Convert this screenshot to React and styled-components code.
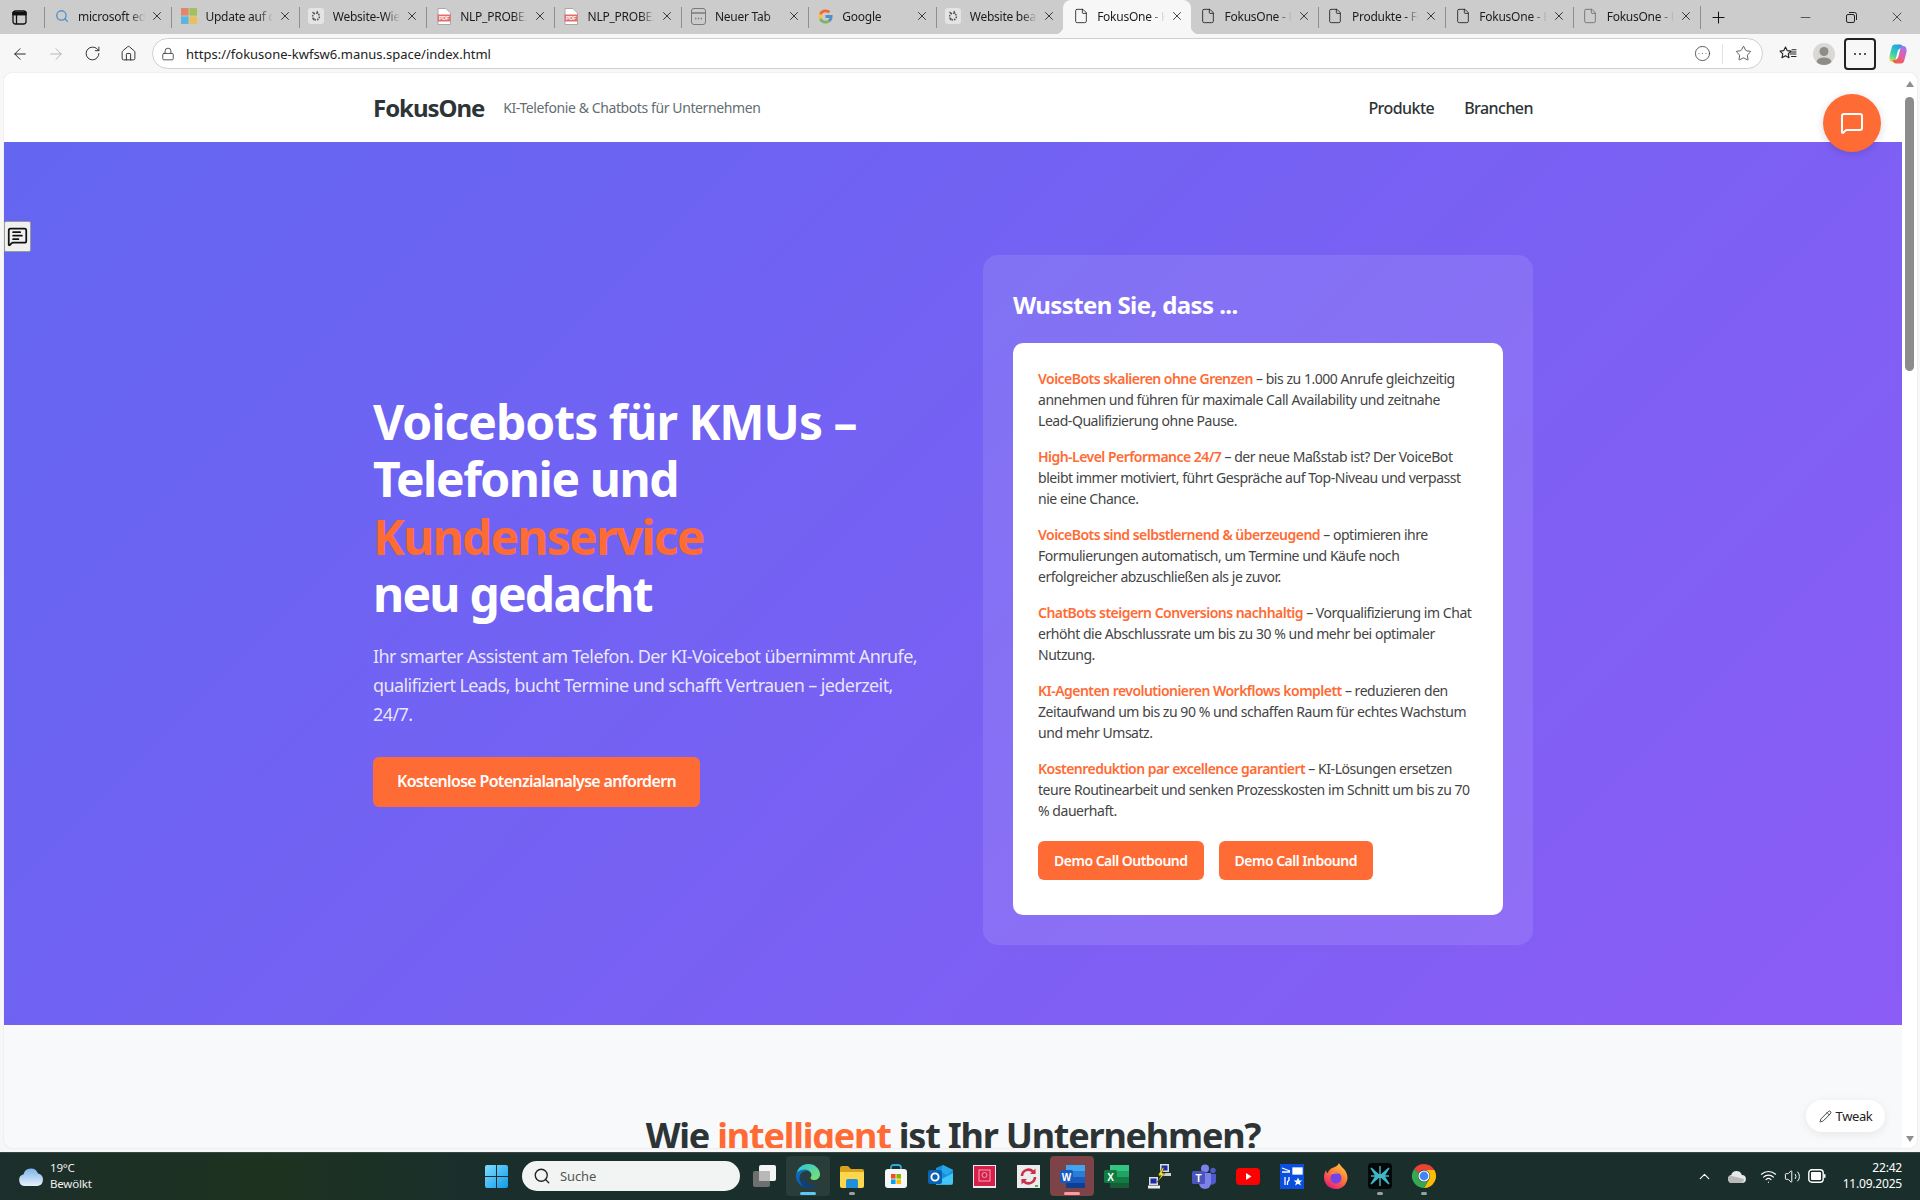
import styled, { createGlobalStyle } from "styled-components";
import {
  ArrowLeft,
  ArrowRight,
  RotateCw,
  House,
  Lock,
  Star,
  X,
  Plus,
  Minus,
  Search,
  MessageSquare,
  MessageSquareText,
  Pencil,
  File,
  ChevronUp,
  Wifi,
  Volume2,
  CircleEllipsis,
} from "lucide-react";
import { FcGoogle } from "react-icons/fc";

const FONT = `"Noto Sans", "Open Sans", Arial, sans-serif`;
const ORANGE = "#ff6b35";

const Global = createGlobalStyle`
  html, body {
    margin: 0;
    padding: 0;
    overflow: hidden;
    background: #f7f7f7;
    font-family: ${FONT};
  }
  * { box-sizing: border-box; }
`;

const Shell = styled.div`
  width: 1920px;
  height: 1200px;
  display: flex;
  flex-direction: column;
  overflow: hidden;
  background: #f7f7f7;
`;

/* browser chrome */
const TitleBar = styled.div`
  height: 34px;
  display: flex;
  align-items: center;
  background: #cccccc;
  flex-shrink: 0;
`;

const SideBtn = styled.div`
  width: 44px;
  display: flex;
  justify-content: center;
  padding-right: 6px;
  color: #111;
`;

const Tab = styled.div`
  position: relative;
  width: 127.4px;
  height: 34px;
  display: flex;
  align-items: center;
  padding: 0 6px 2px 9px;
  font-size: 12px;
  letter-spacing: -0.25px;
  color: #1c1c1c;
  background: ${(p) => (p.$active ? "#f7f7f7" : "transparent")};
  border-radius: ${(p) => (p.$active ? "8px 8px 0 0" : "0")};

  &::before {
    content: "";
    position: absolute;
    left: 0;
    top: 7px;
    bottom: 6px;
    width: 1px;
    background: ${(p) => (p.$active || p.$afterActive ? "transparent" : "#8f8f8f")};
  }

  ${(p) =>
    p.$active &&
    `&::after {
      content: "";
      position: absolute;
      left: -8px;
      right: -8px;
      bottom: 0;
      height: 8px;
      background:
        radial-gradient(circle at 0 0, transparent 8px, #f7f7f7 8.5px) left / 8px 8px no-repeat,
        radial-gradient(circle at 100% 0, transparent 8px, #f7f7f7 8.5px) right / 8px 8px no-repeat;
    }`}
`;

const FavSlot = styled.div`
  width: 17px;
  height: 18px;
  display: flex;
  align-items: center;
  justify-content: center;
  flex-shrink: 0;
  margin-right: 8px;
  opacity: ${(p) => p.$fade ?? 1};
`;

const TabTitle = styled.span`
  flex: 1;
  white-space: nowrap;
  overflow: hidden;
  -webkit-mask-image: linear-gradient(90deg, #000 78%, transparent 100%);
  mask-image: linear-gradient(90deg, #000 78%, transparent 100%);
`;

const TabClose = styled.div`
  width: 16px;
  display: flex;
  justify-content: center;
  flex-shrink: 0;
  margin-left: 4px;
  color: #1a1a1a;
`;

const NewTab = styled.div`
  width: 36px;
  height: 34px;
  display: flex;
  align-items: center;
  justify-content: center;
  border-left: 1px solid #8f8f8f;
  border-image: linear-gradient(#ccc 20%, #8f8f8f 20%, #8f8f8f 82%, #ccc 82%) 1;
  color: #111;
`;

const WinControls = styled.div`
  margin-left: auto;
  display: flex;
  align-items: center;
  color: #222;
`;

const WinBtn = styled.div`
  width: 46px;
  display: flex;
  justify-content: center;
`;

const NavBar = styled.div`
  height: 39px;
  flex-shrink: 0;
  display: flex;
  align-items: center;
  padding-left: 2px;
  background: #f7f7f7;
`;

const NavBtn = styled.div`
  width: 36px;
  display: flex;
  justify-content: center;
  color: ${(p) => (p.$off ? "#b4b4b4" : "#242424")};
`;

const UrlBar = styled.div`
  margin-left: 6px;
  width: 1611px;
  height: 31px;
  flex-shrink: 0;
  display: flex;
  align-items: center;
  background: #fff;
  border: 1px solid #cfcfcf;
  border-radius: 16px;
  padding: 0 10px 0 8px;
  color: #333;
`;

const UrlText = styled.span`
  margin-left: 11px;
  font-size: 13px;
  color: #222;
  flex: 1;
`;

const UrlDivider = styled.div`
  width: 1px;
  height: 20px;
  background: #e2e2e2;
  margin: 0 12px 0 11px;
`;

const ToolIcons = styled.div`
  display: flex;
  align-items: center;
  margin-left: 7px;
  color: #222;
`;

const ToolSlot = styled.div`
  width: ${(p) => p.$w || 36}px;
  display: flex;
  justify-content: center;
`;

const Avatar = styled.div`
  width: 22px;
  height: 22px;
  border-radius: 50%;
  background: #d9d8d4;
  overflow: hidden;
`;

const MoreBtn = styled.div`
  width: 32px;
  height: 32px;
  margin-left: 2px;
  border: 2px solid #222;
  border-radius: 4px;
  display: flex;
  align-items: center;
  justify-content: center;
  gap: 3px;

  i {
    width: 2px;
    height: 2px;
    background: #222;
    border-radius: 50%;
  }
`;

/* viewport */
const ViewRow = styled.div`
  position: relative;
  flex: 1;
  min-height: 0;
  margin: 0 3px 4px 4px;
  display: flex;
  background: #fff;
  border-radius: 8px;
  overflow: hidden;
  box-shadow: 0 0 1px rgba(0, 0, 0, 0.3);
`;

const Page = styled.div`
  width: 1898px;
  flex-shrink: 0;
  overflow: hidden;
  color: #2d3436;
  font-family: ${FONT};
`;

const ScrollBar = styled.div`
  flex: 1;
  display: flex;
  flex-direction: column;
  align-items: center;
  background: #fff;
  padding: 8px 0 6px;
`;

const ScrollArrow = styled.div`
  width: 0;
  height: 0;
  border-left: 4.5px solid transparent;
  border-right: 4.5px solid transparent;
  ${(p) => (p.$down ? "border-top" : "border-bottom")}: 6px solid #8f8f8f;
  ${(p) => (p.$down ? "margin-top: auto;" : "")}
`;

const ScrollThumb = styled.div`
  width: 9px;
  height: 274px;
  margin-top: 10px;
  background: #8c8c8c;
  border-radius: 5px;
`;

const Header = styled.header`
  height: 69px;
  display: flex;
  justify-content: center;
  background: #fff;
`;

const Container = styled.div`
  width: 1160px;
  display: flex;
  align-items: center;
`;

const Logo = styled.div`
  font-size: 24px;
  font-weight: 700;
  letter-spacing: -1.05px;
  color: #2d3436;
`;

const Tagline = styled.div`
  margin-left: 19px;
  font-size: 14px;
  letter-spacing: -0.4px;
  color: #636e72;
`;

const NavLinks = styled.nav`
  margin-left: auto;
  display: flex;
  gap: 30px;
  font-size: 16px;
  font-weight: 500;
  letter-spacing: -0.55px;
  color: #2d3436;
`;

const Hero = styled.section`
  padding: 113px 0 80px;
  display: flex;
  justify-content: center;
  background: linear-gradient(135deg, #6366f1 0%, #8b5cf6 100%);
`;

const HeroGrid = styled.div`
  width: 1160px;
  display: grid;
  grid-template-columns: minmax(0, 1fr) minmax(0, 1fr);
  gap: 60px;
  align-items: center;
`;

const HeroTitle = styled.h1`
  margin: 0 0 19px;
  font-size: 48px;
  line-height: 1.2;
  font-weight: 700;
  color: #fff;
`;

const TitleLine = styled.span`
  display: block;
  white-space: nowrap;
  letter-spacing: ${(p) => p.$track}px;
  color: ${(p) => (p.$accent ? ORANGE : "inherit")};
`;

const HeroText = styled.p`
  margin: 0 0 29px;
  font-size: 18px;
  line-height: 1.6;
  letter-spacing: -0.6px;
  white-space: pre;
  color: rgba(255, 255, 255, 0.85);
`;

const HeroButton = styled.a`
  display: inline-block;
  padding: 13px 24px;
  height: 50px;
  font-size: 16px;
  font-weight: 600;
  letter-spacing: -0.68px;
  color: #fff;
  background: ${ORANGE};
  border-radius: 6px;
`;

const FactCard = styled.aside`
  padding: 30px;
  background: rgba(255, 255, 255, 0.1);
  border-radius: 15px;
`;

const FactTitle = styled.h2`
  margin: 0 0 18px;
  font-size: 24px;
  line-height: 40px;
  font-weight: 700;
  letter-spacing: -0.6px;
  color: #fff;
`;

const FactBody = styled.div`
  padding: 25px;
  background: #fff;
  border-radius: 10px;
`;

const Fact = styled.p`
  margin: 0 0 15px;
  font-size: 14px;
  line-height: 21px;
  letter-spacing: -0.46px;
  color: #444;
  white-space: pre;

  strong {
    color: ${ORANGE};
    font-weight: 600;
    letter-spacing: -0.53px;
  }
`;

const DemoRow = styled.div`
  display: flex;
  gap: 15px;
  margin: 20px 0 10px;
`;

const DemoButton = styled.a`
  height: 39px;
  padding: 0 16px;
  display: flex;
  align-items: center;
  font-size: 14px;
  font-weight: 600;
  letter-spacing: -0.5px;
  color: #fff;
  background: ${ORANGE};
  border-radius: 6px;
`;

const NextSection = styled.section`
  background: #f8f9fa;
  padding-top: 82px;
  height: 300px;
  text-align: center;
`;

const NextTitle = styled.h2`
  margin: 0;
  font-size: 36px;
  line-height: 1.6;
  font-weight: 700;
  letter-spacing: -1.22px;
  color: #2d3436;

  span {
    color: ${ORANGE};
  }
`;

/* overlays */
const ChatFab = styled.div`
  position: absolute;
  top: 21px;
  right: 36px;
  width: 58px;
  height: 58px;
  border-radius: 50%;
  background: ${ORANGE};
  color: #fff;
  display: flex;
  align-items: center;
  justify-content: center;
  box-shadow: 0 2px 8px rgba(0, 0, 0, 0.15);
`;

const CommentBtn = styled.div`
  position: absolute;
  top: 148px;
  left: 0;
  width: 27px;
  height: 31px;
  background: #f0f0f0;
  border: 1px solid #9a9a9a;
  border-radius: 2px;
  display: flex;
  align-items: center;
  justify-content: center;
  color: #111;
`;

const TweakPill = styled.div`
  position: absolute;
  right: 32px;
  bottom: 16px;
  width: 79px;
  height: 32px;
  border-radius: 16px;
  background: #fff;
  display: flex;
  align-items: center;
  justify-content: center;
  gap: 4px;
  font-size: 13px;
  letter-spacing: -0.4px;
  color: #222;
  box-shadow: 0 2px 10px rgba(0, 0, 0, 0.08);
`;

/* taskbar */
const Taskbar = styled.footer`
  height: 48px;
  flex-shrink: 0;
  display: flex;
  align-items: center;
  color: #fff;
  box-shadow: inset 0 1px 0 #3b4744;
  background: linear-gradient(90deg, #1b2e2b 0%, #1e331f 14%, #1a2f2b 24%, #1a2f2c 100%);
  font-family: ${FONT};
`;

const Weather = styled.div`
  width: 474px;
  flex-shrink: 0;
  display: flex;
  align-items: center;
  gap: 6px;
  padding-left: 18px;
`;

const WeatherText = styled.div`
  font-size: 11.5px;
  line-height: 16px;
  letter-spacing: -0.2px;
  color: #f0f0f0;
`;

const TaskSlot = styled.div`
  position: relative;
  width: 44px;
  height: 40px;
  display: flex;
  align-items: center;
  justify-content: center;
  border-radius: 4px;
  background: ${(p) => p.$bg || "transparent"};

  &::after {
    content: "";
    position: absolute;
    bottom: 1px;
    left: 50%;
    transform: translateX(-50%);
    width: ${(p) => (p.$bar ? "16px" : p.$dot ? "6px" : "0")};
    height: 3px;
    border-radius: 2px;
    background: ${(p) => p.$bar || "#9aa3a0"};
  }
`;

const SearchBox = styled.div`
  width: 218px;
  height: 30px;
  margin: 0 2px 0 4px;
  border-radius: 15px;
  background: #f2f4f3;
  display: flex;
  align-items: center;
  gap: 9px;
  padding-left: 11px;
  font-size: 13px;
  letter-spacing: -0.1px;
  color: #555;
`;

const Tray = styled.div`
  margin-left: auto;
  display: flex;
  align-items: center;
  padding-right: 18px;
  color: #fff;
`;

const TraySlot = styled.div`
  width: ${(p) => p.$w || 24}px;
  display: flex;
  justify-content: center;
`;

const Clock = styled.div`
  margin-left: 14px;
  text-align: right;
  font-size: 12px;
  line-height: 16px;
  letter-spacing: -0.2px;
`;

/* small drawings */
const DocIcon = ({ color = "#111" }) => <File size={16} strokeWidth={1.2} color={color} />;

const SidebarIcon = () => (
  <svg width="15" height="15" viewBox="0 0 15 15" fill="none" stroke="#111" strokeWidth="1.3">
    <rect x="1" y="1" width="13" height="13" rx="2.5" />
    <path d="M1 4.5h13M4.5 4.5V14" />
    <path d="M1 2.5h13v2H1z" fill="#111" />
  </svg>
);

const MsFavicon = () => (
  <svg width="16" height="16" viewBox="0 0 16 16">
    <rect width="7.6" height="7.6" fill="#f25022" />
    <rect x="8.4" width="7.6" height="7.6" fill="#7fba00" />
    <rect y="8.4" width="7.6" height="7.6" fill="#00a4ef" />
    <rect x="8.4" y="8.4" width="7.6" height="7.6" fill="#ffb900" />
  </svg>
);

const ManusFavicon = () => (
  <svg width="16" height="16" viewBox="0 0 16 16" fill="none">
    <rect width="16" height="16" rx="3" fill="#e4e4e4" />
    <circle cx="8" cy="8.5" r="3.4" stroke="#555" strokeWidth="1.5" strokeDasharray="1.6 1" />
    <path d="M4.5 4l2 2M9 3l1 2.5M5 12l1.5-1.5" stroke="#555" strokeWidth="1.2" />
  </svg>
);

const PdfFavicon = () => (
  <svg width="14" height="17" viewBox="0 0 14 17">
    <path d="M1 .5h8l4.5 4.5v11.5H1z" fill="#fff" stroke="#a8a8a8" />
    <rect x="0.5" y="6.5" width="13" height="7" fill="#e0706d" />
    <text x="7" y="12" textAnchor="middle" fontSize="5.4" fontWeight="700" fill="#fff" fontFamily="Liberation Sans">
      PDF
    </text>
  </svg>
);

const NewTabFavicon = () => (
  <svg width="15" height="17" viewBox="0 0 15 17" fill="none" stroke="#7a7a7a">
    <rect x="0.5" y="0.5" width="14" height="16" rx="2.5" />
    <path d="M.5 5h14M4 10.5h1.4M6.8 10.5h1.4M9.6 10.5H11" strokeWidth="1.3" />
  </svg>
);

const SearchFavicon = () => <Search size={14} strokeWidth={2.2} color="#4f8fc9" />;

const RestoreIcon = () => (
  <svg width="11" height="11" viewBox="0 0 11 11" fill="none" stroke="#222">
    <rect x="0.5" y="2.5" width="8" height="8" rx="1.5" />
    <path d="M3 .5h5.5a2 2 0 0 1 2 2V8" />
  </svg>
);

const FavStarIcon = () => (
  <svg width="18" height="18" viewBox="0 0 18 18" fill="none" stroke="#222" strokeWidth="1.1" strokeLinejoin="round">
    <path d="M6.5 2l1.7 3.6 3.8.5-2.8 2.7.8 3.9-3.5-1.9L3 12.7l.8-3.9L1 6.1l3.8-.5z" />
    <path d="M11 9h6M12.5 11.5H17M13 4.8h4M11.5 7h5.5" strokeLinecap="round" />
  </svg>
);

const AvatarFigure = () => (
  <Avatar>
    <svg width="22" height="22" viewBox="0 0 22 22" fill="#8f8d88">
      <circle cx="11" cy="8.5" r="4.5" />
      <ellipse cx="11" cy="19" rx="7.5" ry="4.5" />
    </svg>
  </Avatar>
);

const COPILOT_RIBBON =
  "M8 1.5C6 1.5 5 3 4.6 5L2.5 13C2 16 3 19 5.5 19H8L10.3 9.500C10.900 6.500 12.500 5 15 5H16.500C15.800 2.500 14.500 1.500 13 1.500Z";

const CopilotIcon = () => (
  <svg width="22" height="22" viewBox="0 0 22 22">
    <defs>
      <linearGradient id="cpA" x1="0.7" y1="0" x2="0.2" y2="1">
        <stop offset="0" stopColor="#1f9fe8" />
        <stop offset="0.6" stopColor="#33d3b0" />
        <stop offset="1" stopColor="#d8e04a" />
      </linearGradient>
      <linearGradient id="cpB" x1="0.7" y1="0" x2="0.2" y2="1">
        <stop offset="0" stopColor="#f0603c" />
        <stop offset="0.45" stopColor="#e85ca6" />
        <stop offset="1" stopColor="#9a78f5" />
      </linearGradient>
    </defs>
    <path d={COPILOT_RIBBON} fill="url(#cpA)" />
    <path d={COPILOT_RIBBON} fill="url(#cpB)" transform="rotate(180 11 11)" />
  </svg>
);

const WeatherCloud = () => (
  <svg width="26" height="22" viewBox="0 0 26 22">
    <defs>
      <linearGradient id="wc" x1="0" y1="0" x2="0" y2="1">
        <stop offset="0" stopColor="#7db4ec" />
        <stop offset="1" stopColor="#e8f0fa" />
      </linearGradient>
    </defs>
    <path d="M7 21a6 6 0 0 1-1.4-11.8A7.5 7.5 0 0 1 20 8.6 6.3 6.3 0 0 1 19.5 21z" fill="url(#wc)" />
  </svg>
);

const WinLogo = () => (
  <svg width="23" height="23" viewBox="0 0 23 23">
    <defs>
      <linearGradient id="wl" x1="0" y1="0" x2="1" y2="1">
        <stop offset="0" stopColor="#7fdcff" />
        <stop offset="1" stopColor="#0f9bea" />
      </linearGradient>
    </defs>
    <path d="M2 0h9v11H0V2a2 2 0 0 1 2-2zM12 0h9a2 2 0 0 1 2 2v9H12zM0 12h11v11H2a2 2 0 0 1-2-2zM12 12h11v9a2 2 0 0 1-2 2h-9z" fill="url(#wl)" />
  </svg>
);

const TaskView = () => (
  <svg width="25" height="24" viewBox="0 0 25 24">
    <rect x="7" y="1" width="17" height="16" rx="2" fill="#f4f4f4" />
    <rect x="1" y="7" width="17" height="16" rx="2" fill="#6f6f6f" />
    <rect x="7" y="7" width="11" height="10" fill="#b8b8b8" />
  </svg>
);

const EdgeIcon = () => (
  <svg width="26" height="26" viewBox="0 0 26 26">
    <defs>
      <linearGradient id="edB" x1="0" y1="0" x2="0.6" y2="1">
        <stop offset="0" stopColor="#0c7bd0" />
        <stop offset="1" stopColor="#0a4f9e" />
      </linearGradient>
      <linearGradient id="edG" x1="0" y1="0" x2="1" y2="1">
        <stop offset="0" stopColor="#2fc4d8" />
        <stop offset="1" stopColor="#7fe36a" />
      </linearGradient>
    </defs>
    <path d="M1 13C1 6 6.5 1 13 1c7 0 12 5 12 10.5 0 3.5-3 5.5-6 5.5-2 0-3.5-.8-3.5-2 0-1 1-1.5 1-3 0-2.5-2.5-4-5-4-4 0-7 3-7 7 0 4 3 8 8 8.8C6.5 25 1 20 1 13z" fill="url(#edB)" />
    <path d="M2 9.5C3.5 4.5 8 1 13 1c7 0 12 5 12 10.5 0 3.5-3 5.5-6 5.5-2 0-3.5-.8-3.5-2 0-1 1-1.5 1-3 0-3-3-5.5-6.5-5.5-3 0-6.5 1-8 3z" fill="url(#edG)" />
    <path d="M10 13.5c-1.5 5 2.5 10 9 9 1.5-.2 3-1 4-2-1.5 3-5 4.500-9 4.500-3.500 0-5.500-1-6.500-2.500-2-3-.5-7 2.500-9z" fill="#0d3f86" />
  </svg>
);

const FolderIcon = () => (
  <svg width="26" height="23" viewBox="0 0 26 23">
    <path d="M1 3a2 2 0 0 1 2-2h6l3 3h11a2 2 0 0 1 2 2v3H1z" fill="#d9a21c" />
    <path d="M1 7h24v14a2 2 0 0 1-2 2H3a2 2 0 0 1-2-2z" fill="#ffd74f" />
    <path d="M7 16a2 2 0 0 1 2-2h8a2 2 0 0 1 2 2v7H7z" fill="#1f8fdc" />
  </svg>
);

const StoreIcon = () => (
  <svg width="24" height="25" viewBox="0 0 24 25" fill="none">
    <path d="M7 7V3.500A2.500 2.500 0 0 1 9.500 1h5A2.500 2.500 0 0 1 17 3.500V7" stroke="#2aa9dd" strokeWidth="1.8" />
    <rect x="1" y="5" width="22" height="19" rx="3" fill="#f6f6f6" />
    <rect x="7" y="10" width="4.600" height="4.600" fill="#f25022" />
    <rect x="12.400" y="10" width="4.600" height="4.600" fill="#7fba00" />
    <rect x="7" y="15.400" width="4.600" height="4.600" fill="#00a4ef" />
    <rect x="12.400" y="15.400" width="4.600" height="4.600" fill="#ffb900" />
  </svg>
);

const OutlookIcon = () => (
  <svg width="25" height="23" viewBox="0 0 25 23">
    <path d="M8 3l7-3 10 5v12a2 2 0 0 1-2 2H8z" fill="#1490df" />
    <path d="M15 0l10 5-6 5-6-3z" fill="#28a8ea" />
    <path d="M8 17l17-9v10a2 2 0 0 1-2 2H8z" fill="#50d9ff" opacity="0.75" />
    <rect x="0" y="5" width="14" height="14" rx="2" fill="#0b62b5" />
    <circle cx="7" cy="12" r="3.600" fill="none" stroke="#fff" strokeWidth="1.900" />
  </svg>
);

const AcrobatLike = () => (
  <svg width="23" height="23" viewBox="0 0 23 23">
    <rect width="23" height="23" fill="#ececec" />
    <rect x="1" y="1" width="21" height="20" fill="#d61f4b" />
    <rect x="6" y="5" width="11" height="11" fill="none" stroke="#f3a6b6" />
    <circle cx="11.500" cy="10" r="2.500" fill="none" stroke="#f3a6b6" />
  </svg>
);

const SyncLike = () => (
  <svg width="23" height="23" viewBox="0 0 23 23" fill="none">
    <rect width="23" height="23" fill="#ececec" />
    <path d="M5 11a6.500 6.500 0 0 1 11-4.500L18 8" stroke="#c9314a" strokeWidth="2.600" />
    <path d="M18 12a6.500 6.500 0 0 1-11 4.500L5 15" stroke="#c9314a" strokeWidth="2.600" />
    <path d="M18.500 3.500V9H13M4.500 19.500V14H10" fill="#c9314a" />
    <rect x="18" y="20" width="3" height="2" fill="#55b04a" />
  </svg>
);

const WordIcon = () => (
  <svg width="25" height="23" viewBox="0 0 25 23">
    <rect x="6" y="0" width="19" height="6" fill="#41a5ee" />
    <rect x="6" y="6" width="19" height="6" fill="#2b7cd3" />
    <rect x="6" y="12" width="19" height="6" fill="#185abd" />
    <rect x="6" y="18" width="19" height="5" fill="#103f91" />
    <rect x="0" y="5" width="13" height="13" rx="1.500" fill="#185abd" />
    <text x="6.500" y="15.500" textAnchor="middle" fontSize="10" fontWeight="700" fill="#fff" fontFamily="Liberation Sans">
      W
    </text>
  </svg>
);

const ExcelIcon = () => (
  <svg width="25" height="23" viewBox="0 0 25 23">
    <rect x="6" y="0" width="19" height="6" fill="#33c481" />
    <rect x="6" y="6" width="19" height="6" fill="#21a366" />
    <rect x="6" y="12" width="19" height="6" fill="#107c41" />
    <rect x="6" y="18" width="19" height="5" fill="#185c37" />
    <rect x="0" y="5" width="13" height="13" rx="1.500" fill="#107c41" />
    <text x="6.500" y="15.500" textAnchor="middle" fontSize="10" fontWeight="700" fill="#fff" fontFamily="Liberation Sans">
      X
    </text>
  </svg>
);

const PuttyIcon = () => (
  <svg width="24" height="25" viewBox="0 0 24 25">
    <rect x="12" y="0" width="9" height="8" fill="#dcdcdc" />
    <rect x="13.500" y="1.500" width="6" height="5" fill="#1a2aa8" />
    <rect x="11" y="9" width="12" height="3" fill="#cfcfcf" />
    <rect x="1" y="13" width="9" height="8" fill="#dcdcdc" />
    <rect x="2.500" y="14.500" width="6" height="5" fill="#1a2aa8" />
    <rect x="0" y="21.500" width="12" height="3" fill="#eee" />
    <path d="M15 3l-5 8 3 .5-4 7 8-9-3-.5 2-5z" fill="#f4e024" stroke="#222" strokeWidth="0.500" />
  </svg>
);

const TeamsIcon = () => (
  <svg width="25" height="25" viewBox="0 0 25 25">
    <circle cx="13" cy="4.500" r="4" fill="#7b83eb" />
    <circle cx="21" cy="6.500" r="2.700" fill="#5059c9" />
    <path d="M17 10h7v8a4 4 0 0 1-7 1z" fill="#5059c9" />
    <path d="M7 9h12v10a6 6 0 0 1-12 0z" fill="#7b83eb" />
    <rect x="0" y="7" width="13" height="13" rx="1.500" fill="#4b53bc" />
    <text x="6.500" y="17.500" textAnchor="middle" fontSize="10" fontWeight="700" fill="#fff" fontFamily="Liberation Sans">
      T
    </text>
  </svg>
);

const YoutubeIcon = () => (
  <svg width="24" height="17" viewBox="0 0 24 17">
    <rect width="24" height="17" rx="4" fill="#f00" />
    <path d="M10 5l5.500 3.500L10 12z" fill="#fff" />
  </svg>
);

const HpIcon = () => (
  <svg width="24" height="25" viewBox="0 0 24 25" fill="none" stroke="#fff" strokeWidth="1.300">
    <rect width="24" height="25" fill="#0b4fe0" stroke="none" />
    <path d="M2 4l8 3M2 8h8M5 13v8M9 13v3l-1.500 2V21" />
    <rect x="13" y="4" width="9" height="6" fill="#fff" />
    <path d="M18 13.500l1.300 3h3l-2.400 2 1 3-2.900-1.800-2.900 1.800 1-3-2.400-2h3z" fill="#fff" stroke="none" />
  </svg>
);

const FirefoxIcon = () => (
  <svg width="24" height="26" viewBox="0 0 24 26">
    <defs>
      <linearGradient id="ffx" x1="0.8" y1="0" x2="0.2" y2="1">
        <stop offset="0" stopColor="#ffcb3d" />
        <stop offset="0.5" stopColor="#ff7139" />
        <stop offset="1" stopColor="#e31587" />
      </linearGradient>
    </defs>
    <path d="M15 0c1 3 5 5 7 9 2 4 2 8 0 11-2 4-6 6-10 6C5 26 0 21 0 14c0-3 1-5 2-7 0 2 1 3 2 3 0-2 2-4 4-5 3-1 6-2 7-5z" fill="url(#ffx)" />
    <circle cx="12" cy="15" r="5.500" fill="#7542e5" />
    <path d="M7 11c2-2 6-2 8 0-3-1-6 0-8 0z" fill="#ffa436" />
  </svg>
);

const AppStarIcon = () => (
  <svg width="24" height="26" viewBox="0 0 24 26">
    <rect width="24" height="26" rx="4" fill="#050708" />
    <path d="M3 5l9 8 9-8-5 8 5 8-9-8-9 8 5-8zM12 3v20M3 13h18" fill="#3fb8c8" stroke="#3fb8c8" strokeWidth="1.400" />
  </svg>
);

const ChromeIcon = () => (
  <svg width="26" height="26" viewBox="0 0 26 26">
    <path d="M13 1a12 12 0 0 1 10.400 6H13a6 6 0 0 0-5.200 3L3.200 6A12 12 0 0 1 13 1z" fill="#ea4335" />
    <path d="M23.400 7A12 12 0 0 1 13 25l5.200-9A6 6 0 0 0 18.200 10 6 6 0 0 0 13 7z" fill="#fbbc04" />
    <path d="M3.200 6l4.600 4A6 6 0 0 0 13 19a6 6 0 0 0 5.200-3L13 25A12 12 0 0 1 3.200 6z" fill="#34a853" />
    <circle cx="13" cy="13" r="5.600" fill="#fff" />
    <circle cx="13" cy="13" r="4.400" fill="#4285f4" />
  </svg>
);

const TrayCloud = () => (
  <svg width="20" height="15" viewBox="0 0 20 15">
    <path d="M5 14a4 4 0 0 1-.8-7.900A5.500 5.500 0 0 1 14.800 6 4 4 0 0 1 15 14z" fill="#e8e8e8" />
    <path d="M5 14a4 4 0 0 1-2-7.400L17 10a4 4 0 0 1-2 4z" fill="#b9b9b9" />
  </svg>
);

const BatteryIcon = () => (
  <svg width="18" height="14" viewBox="0 0 18 14" fill="none">
    <rect x="0.800" y="0.800" width="14.400" height="12.400" rx="3" stroke="#fff" strokeWidth="1.400" />
    <rect x="3" y="3" width="10" height="8" rx="1" fill="#fff" />
    <rect x="16" y="5" width="1.500" height="4" rx="0.700" fill="#fff" />
  </svg>
);

const TABS = [
  { title: "microsoft edge", icon: <SearchFavicon /> },
  { title: "Update auf die", icon: <MsFavicon />, fade: 0.55 },
  { title: "Website-Wiede", icon: <ManusFavicon /> },
  { title: "NLP_PROBE.pdf", icon: <PdfFavicon /> },
  { title: "NLP_PROBE.pdf", icon: <PdfFavicon /> },
  { title: "Neuer Tab", icon: <NewTabFavicon /> },
  { title: "Google", icon: <FcGoogle size={17} />, fade: 0.7 },
  { title: "Website bearb", icon: <ManusFavicon /> },
  { title: "FokusOne - KI", icon: <DocIcon />, active: true },
  { title: "FokusOne - KI", icon: <DocIcon />, afterActive: true },
  { title: "Produkte - Fok", icon: <DocIcon /> },
  { title: "FokusOne - KI", icon: <DocIcon /> },
  { title: "FokusOne - KI", icon: <DocIcon color="#666" /> },
];

const FACTS = [
  {
    title: "VoiceBots skalieren ohne Grenzen",
    text: " – bis zu 1.000 Anrufe gleichzeitig\nannehmen und führen für maximale Call Availability und zeitnahe\nLead-Qualifizierung ohne Pause.",
  },
  {
    title: "High-Level Performance 24/7",
    text: " – der neue Maßstab ist? Der VoiceBot\nbleibt immer motiviert, führt Gespräche auf Top-Niveau und verpasst\nnie eine Chance.",
  },
  {
    title: "VoiceBots sind selbstlernend & überzeugend",
    text: " – optimieren ihre\nFormulierungen automatisch, um Termine und Käufe noch\nerfolgreicher abzuschließen als je zuvor.",
  },
  {
    title: "ChatBots steigern Conversions nachhaltig",
    text: " – Vorqualifizierung im Chat\nerhöht die Abschlussrate um bis zu 30 % und mehr bei optimaler\nNutzung.",
  },
  {
    title: "KI-Agenten revolutionieren Workflows komplett",
    text: " – reduzieren den\nZeitaufwand um bis zu 90 % und schaffen Raum für echtes Wachstum\nund mehr Umsatz.",
  },
  {
    title: "Kostenreduktion par excellence garantiert",
    text: " – KI-Lösungen ersetzen\nteure Routinearbeit und senken Prozesskosten im Schnitt um bis zu 70\n% dauerhaft.",
  },
];

const TASK_APPS = [
  { key: "view", icon: <TaskView /> },
  { key: "edge", icon: <EdgeIcon />, bg: "rgba(255,255,255,0.07)", bar: "#5cc8f5" },
  { key: "files", icon: <FolderIcon />, dot: true },
  { key: "store", icon: <StoreIcon /> },
  { key: "outlook", icon: <OutlookIcon /> },
  { key: "pdf", icon: <AcrobatLike /> },
  { key: "sync", icon: <SyncLike /> },
  { key: "word", icon: <WordIcon />, bg: "#7c4446", bar: "#ff9aa5" },
  { key: "excel", icon: <ExcelIcon /> },
  { key: "putty", icon: <PuttyIcon /> },
  { key: "teams", icon: <TeamsIcon /> },
  { key: "yt", icon: <YoutubeIcon /> },
  { key: "hp", icon: <HpIcon /> },
  { key: "ff", icon: <FirefoxIcon /> },
  { key: "star", icon: <AppStarIcon />, dot: true },
  { key: "chrome", icon: <ChromeIcon />, dot: true },
];

export default function App() {
  return (
    <Shell>
      <Global />
      <TitleBar>
        <SideBtn>
          <SidebarIcon />
        </SideBtn>
        {TABS.map((t, i) => (
          <Tab key={i} $active={t.active} $afterActive={t.afterActive}>
            <FavSlot $fade={t.fade}>{t.icon}</FavSlot>
            <TabTitle>{t.title}</TabTitle>
            <TabClose>
              <X size={14} strokeWidth={1.4} />
            </TabClose>
          </Tab>
        ))}
        <NewTab>
          <Plus size={19} strokeWidth={1.3} />
        </NewTab>
        <WinControls>
          <WinBtn>
            <Minus size={15} strokeWidth={1.1} />
          </WinBtn>
          <WinBtn>
            <RestoreIcon />
          </WinBtn>
          <WinBtn>
            <X size={16} strokeWidth={1.1} />
          </WinBtn>
        </WinControls>
      </TitleBar>

      <NavBar>
        <NavBtn>
          <ArrowLeft size={18} strokeWidth={1.3} />
        </NavBtn>
        <NavBtn $off>
          <ArrowRight size={18} strokeWidth={1.3} />
        </NavBtn>
        <NavBtn>
          <RotateCw size={17} strokeWidth={1.3} />
        </NavBtn>
        <NavBtn>
          <House size={17} strokeWidth={1.3} />
        </NavBtn>
        <UrlBar>
          <Lock size={14} strokeWidth={1.4} />
          <UrlText>https://fokusone-kwfsw6.manus.space/index.html</UrlText>
          <CircleEllipsis size={17} strokeWidth={1.1} />
          <UrlDivider />
          <Star size={17} strokeWidth={1.1} />
        </UrlBar>
        <ToolIcons>
          <ToolSlot $w={36}>
            <FavStarIcon />
          </ToolSlot>
          <ToolSlot $w={36}>
            <AvatarFigure />
          </ToolSlot>
          <MoreBtn>
            <i />
            <i />
            <i />
          </MoreBtn>
          <ToolSlot $w={44}>
            <CopilotIcon />
          </ToolSlot>
        </ToolIcons>
      </NavBar>

      <ViewRow>
        <Page>
          <Header>
            <Container>
              <Logo>FokusOne</Logo>
              <Tagline>KI-Telefonie &amp; Chatbots für Unternehmen</Tagline>
              <NavLinks>
                <span>Produkte</span>
                <span>Branchen</span>
              </NavLinks>
            </Container>
          </Header>

          <Hero>
            <HeroGrid>
              <div>
                <HeroTitle>
                  <TitleLine $track={-1}>Voicebots für KMUs –</TitleLine>
                  <TitleLine $track={-1.45}>Telefonie und</TitleLine>
                  <TitleLine $track={-1.78} $accent>
                    Kundenservice
                  </TitleLine>
                  <TitleLine $track={-1.78}>neu gedacht</TitleLine>
                </HeroTitle>
                <HeroText>
                  {"Ihr smarter Assistent am Telefon. Der KI-Voicebot übernimmt Anrufe,\nqualifiziert Leads, bucht Termine und schafft Vertrauen – jederzeit,\n24/7."}
                </HeroText>
                <HeroButton>Kostenlose Potenzialanalyse anfordern</HeroButton>
              </div>
              <FactCard>
                <FactTitle>Wussten Sie, dass ...</FactTitle>
                <FactBody>
                  {FACTS.map((f) => (
                    <Fact key={f.title}>
                      <strong>{f.title}</strong>
                      {f.text}
                    </Fact>
                  ))}
                  <DemoRow>
                    <DemoButton>Demo Call Outbound</DemoButton>
                    <DemoButton>Demo Call Inbound</DemoButton>
                  </DemoRow>
                </FactBody>
              </FactCard>
            </HeroGrid>
          </Hero>

          <NextSection>
            <NextTitle>
              Wie <span>intelligent</span> ist Ihr Unternehmen?
            </NextTitle>
          </NextSection>
        </Page>

        <ScrollBar>
          <ScrollArrow />
          <ScrollThumb />
          <ScrollArrow $down />
        </ScrollBar>

        <ChatFab>
          <MessageSquare size={24} strokeWidth={2} />
        </ChatFab>
        <CommentBtn>
          <MessageSquareText size={21} strokeWidth={2} />
        </CommentBtn>
        <TweakPill>
          <Pencil size={13} strokeWidth={1.5} />
          Tweak
        </TweakPill>
      </ViewRow>

      <Taskbar>
        <Weather>
          <WeatherCloud />
          <WeatherText>
            19°C
            <br />
            Bewölkt
          </WeatherText>
        </Weather>
        <TaskSlot>
          <WinLogo />
        </TaskSlot>
        <SearchBox>
          <Search size={18} strokeWidth={1.8} color="#222" />
          Suche
        </SearchBox>
        {TASK_APPS.map((a) => (
          <TaskSlot key={a.key} $bg={a.bg} $bar={a.bar} $dot={a.dot}>
            {a.icon}
          </TaskSlot>
        ))}
        <Tray>
          <TraySlot>
            <ChevronUp size={17} strokeWidth={1.6} />
          </TraySlot>
          <TraySlot $w={40}>
            <TrayCloud />
          </TraySlot>
          <TraySlot>
            <Wifi size={17} strokeWidth={1.6} />
          </TraySlot>
          <TraySlot>
            <Volume2 size={17} strokeWidth={1.4} />
          </TraySlot>
          <TraySlot>
            <BatteryIcon />
          </TraySlot>
          <Clock>
            22:42
            <br />
            11.09.2025
          </Clock>
        </Tray>
      </Taskbar>
    </Shell>
  );
}
